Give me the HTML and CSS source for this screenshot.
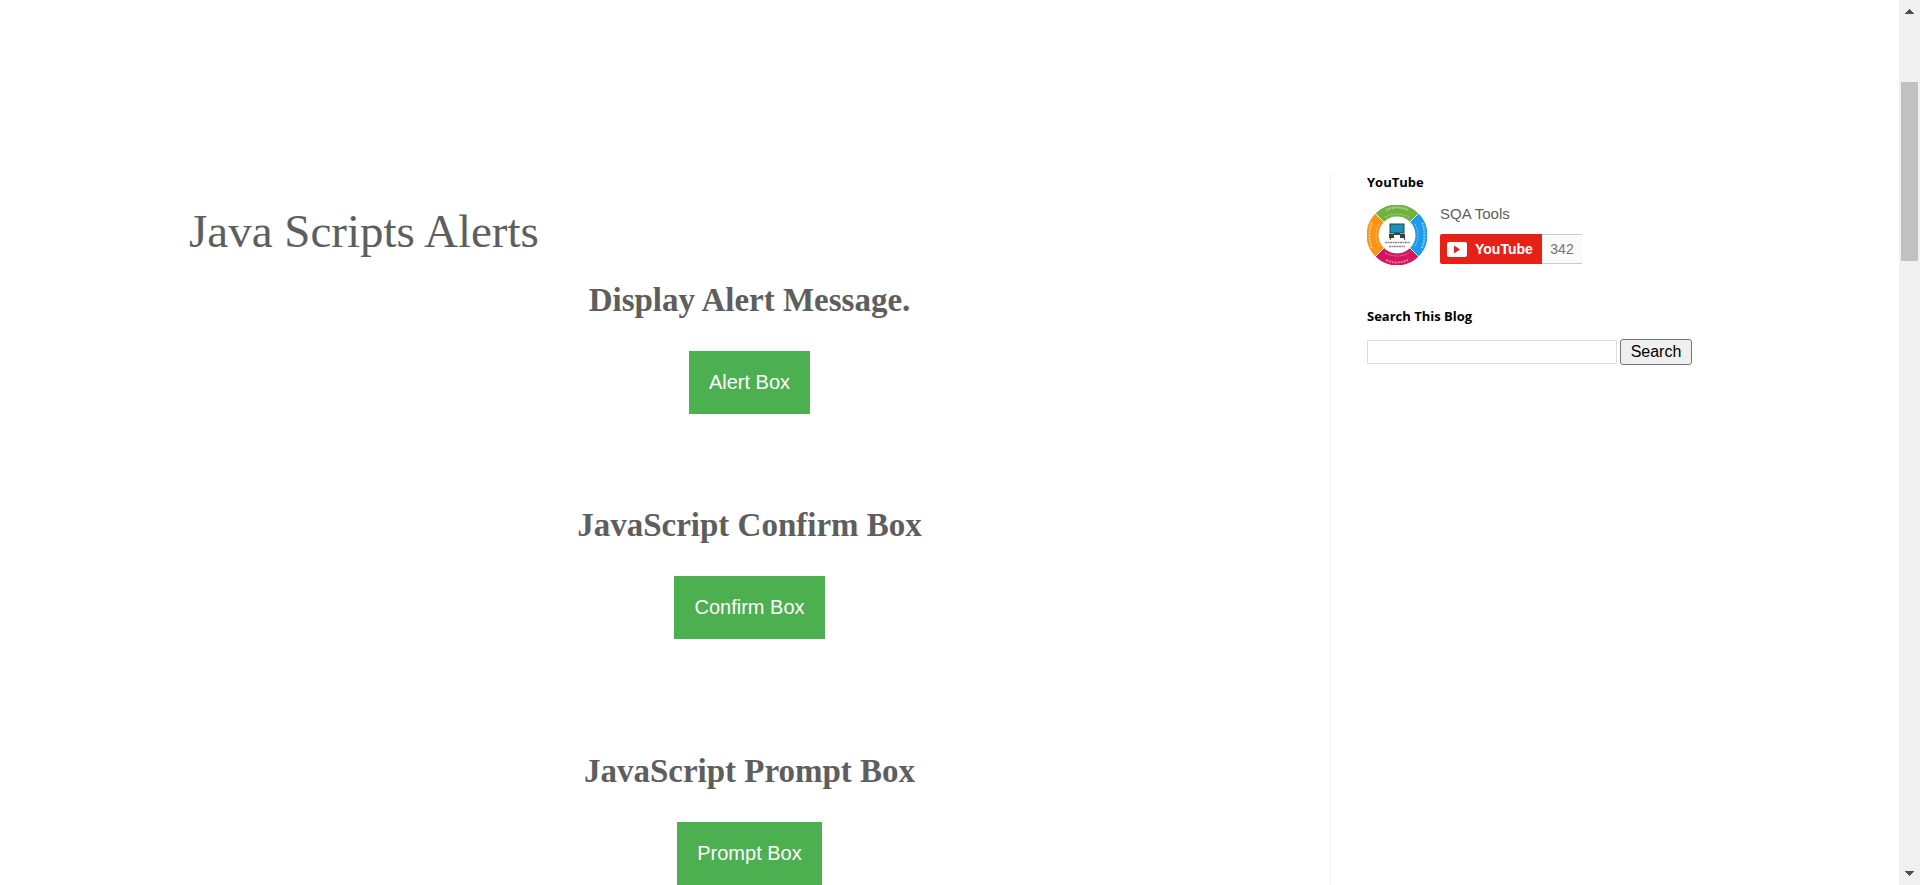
FILE: index.html
```html
<!DOCTYPE html>
<html lang="en">
<head>
<meta charset="utf-8">
<title>Java Scripts Alerts</title>
<link rel="stylesheet" href="styles.css">
</head>
<body>
<div class="page">
  <main class="post">
    <h1 class="post-title">Java Scripts Alerts</h1>
    <section class="demo">
      <h2 class="demo-title">Display Alert Message.</h2>
      <button class="demo-button" type="button">Alert Box</button>
    </section>
    <section class="demo">
      <h2 class="demo-title">JavaScript Confirm Box</h2>
      <button class="demo-button" type="button">Confirm Box</button>
    </section>
    <section class="demo demo-last">
      <h2 class="demo-title">JavaScript Prompt Box</h2>
      <button class="demo-button" type="button">Prompt Box</button>
    </section>
  </main>
  <aside class="sidebar">
    <section class="widget">
      <h3 class="widget-title">YouTube</h3>
      <div class="channel">
        <svg class="avatar" viewBox="0 0 60 60" aria-hidden="true">
          <g fill="none" stroke-width="12">
            <path d="M12.700 12.700A24.500 24.500 0 0 1 47.300 12.700" stroke="#6fb23c"/>
            <path d="M47.300 12.700A24.500 24.500 0 0 1 47.300 47.300" stroke="#1e9be8"/>
            <path d="M47.300 47.300A24.500 24.500 0 0 1 12.700 47.300" stroke="#d3165f"/>
            <path d="M12.700 47.300A24.500 24.500 0 0 1 12.700 12.700" stroke="#fb9415"/>
          </g>
          <path d="M8 8L18 18M52 8L42 18M52 52L42 42M8 52L18 42" stroke="#fff" stroke-width="1"/>
          <circle cx="30" cy="30" r="18" fill="#fff"/>
          <g fill="none" stroke="#fff" stroke-dasharray="2 1" opacity=".45">
            <path d="M19 5Q30 0 41 5M19 55Q30 60 41 55" stroke-width="2"/>
            <path d="M5 43Q0 30 5 17M55 43Q60 30 55 17" stroke-width="2"/>
            <path d="M18 12Q30 6 42 12M18 48Q30 54 42 48M12 41Q6 30 12 19M48 41Q54 30 48 19" stroke-width="1"/>
          </g>
          <rect x="23" y="19" width="14" height="9" fill="#1694b5" stroke="#23434d"/>
          <path d="M22 29h5v4h-5zM33 29h5v4h-5zM27 28h6v2h-6z" fill="#3d4145"/>
          <path d="M24 33l-1 2M37 33l1 2" stroke="#3d4145"/>
          <path d="M18 37.500h25M22 41.500h16" stroke="#888" stroke-width="1.500" stroke-dasharray="2 .5"/>
        </svg>
        <div class="channel-info">
          <a class="channel-name" href="#">SQA Tools</a>
          <div class="subscribe">
            <button class="subscribe-button" type="button">
              <svg class="play" viewBox="0 0 20 15" aria-hidden="true">
                <rect width="20" height="15" rx="2" fill="#fff"/>
                <path d="M7 3.500v8l6-4z" fill="#e62117"/>
              </svg>
              YouTube
            </button>
            <span class="subscribe-count">342</span>
          </div>
        </div>
      </div>
    </section>
    <section class="widget">
      <h3 class="widget-title"><label for="blog-search">Search This Blog</label></h3>
      <form class="search">
        <input class="search-input" id="blog-search" type="text">
        <button class="search-button" type="submit">Search</button>
      </form>
    </section>
  </aside>
</div>
<div class="scrollbar" aria-hidden="true">
  <svg class="arrow" viewBox="0 0 9 5" shape-rendering="crispEdges"><path d="M4 0h1v1h1v1h1v1h1v1h1v1H0V4h1V3h1V2h1V1h1z" fill="#505050"/></svg>
  <div class="track"><div class="thumb"></div></div>
  <svg class="arrow" viewBox="0 0 9 5" shape-rendering="crispEdges"><path d="M0 0h9v1H8v1H7v1H6v1H5v1H4V4H3V3H2V2H1V1H0z" fill="#505050"/></svg>
</div>
</body>
</html>
```
FILE: styles.css
```css
* {
  box-sizing: border-box;
}

body {
  margin: 0;
  min-height: 100vh;
  display: flex;
  background: #fff;
  color: #5e5e5e;
  font-family: "Liberation Sans", Arial, sans-serif;
}

h1, h2, h3 {
  margin: 0;
}

.page {
  flex: 1;
  display: flex;
  padding: 175px 189px 0;
}

.post {
  flex: 1;
  padding: 30px 20px 0 0;
  font-family: Georgia, "Liberation Serif", serif;
}

.post-title {
  margin-bottom: 25px;
  font-size: 47px;
  font-weight: 400;
  line-height: 52px;
}

.demo {
  display: flex;
  flex-direction: column;
  align-items: center;
  gap: 33px;
  margin-bottom: 93px;
}

.demo-title {
  font-size: 33px;
  line-height: 36px;
}

.demo-button {
  padding: 20px;
  border: 0;
  background: #4caf50;
  color: #fff;
  font: 20px/23px "Liberation Sans", Arial, sans-serif;
}

.demo-last {
  margin: 114px 0 0;
}

.sidebar {
  width: 380px;
  padding-left: 36px;
  border-left: 1px solid #eee;
}

.widget {
  margin-bottom: 44px;
}

.widget-title {
  margin-bottom: 15px;
  color: #000;
  font: bold 13px/15px "Open Sans", sans-serif;
}

.channel {
  display: flex;
  gap: 13px;
}

.avatar {
  width: 60px;
  height: 60px;
}

.channel-name {
  display: block;
  margin-bottom: 12px;
  color: #5e5e5e;
  font-size: 15px;
  line-height: 17px;
  text-decoration: none;
}

.subscribe {
  display: flex;
  height: 30px;
}

.subscribe-button {
  display: flex;
  align-items: center;
  gap: 8px;
  width: 102px;
  padding: 0 7px;
  border: 0;
  border-radius: 2px 0 0 2px;
  background: #e62117;
  color: #fff;
  font: bold 14px/30px "Liberation Sans", Arial, sans-serif;
}

.play {
  width: 20px;
  height: 15px;
}

.subscribe-count {
  width: 40px;
  border: solid #ccc;
  border-width: 1px 0;
  background: #fafafa;
  color: #737373;
  font-size: 14px;
  line-height: 29px;
  text-align: center;
}

.search {
  display: flex;
  align-items: center;
  gap: 3px;
}

.search-input {
  width: 250px;
  height: 24px;
  padding: 2px;
  border: 1px solid #ddd;
  font-size: 16px;
}

.search-button {
  width: 72px;
  height: 26px;
  padding: 0;
  border: 1px solid #767676;
  border-radius: 3px;
  background: #efefef;
  color: #000;
  font: 16px/22px "Liberation Sans", Arial, sans-serif;
}

.scrollbar {
  display: flex;
  flex-direction: column;
  align-items: center;
  justify-content: space-between;
  width: 21px;
  padding: 9px 0;
  background: #f0f0f0;
}

.arrow {
  width: 9px;
  height: 5px;
}

.track {
  flex: 1;
  width: 17px;
  padding-top: 68px;
}

.thumb {
  height: 179px;
  background: #c1c1c1;
}
```
